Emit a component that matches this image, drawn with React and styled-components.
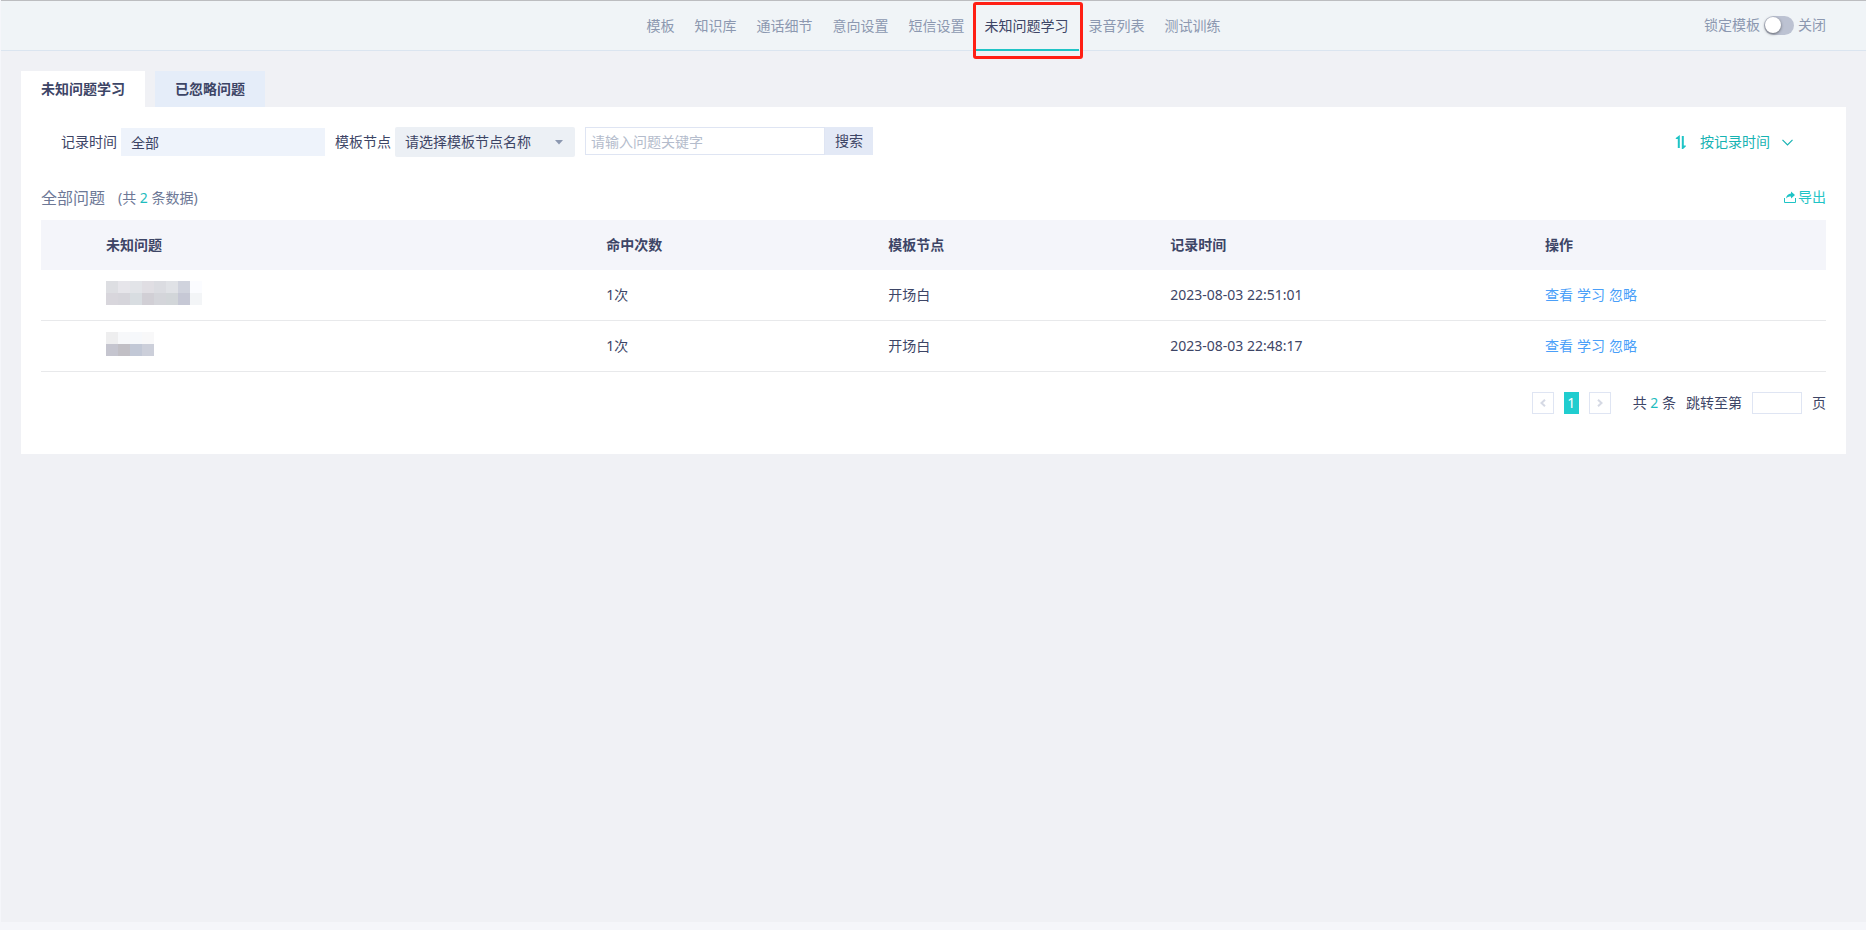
import React, { useState } from "react";
import styled, { createGlobalStyle } from "styled-components";

const GlobalStyle = createGlobalStyle`
  * {
    box-sizing: border-box;
  }
  body {
    margin: 0;
    background: #f5f6fa;
    color: #3d4566;
    font-family: "Noto Sans", "Noto Sans CJK SC", sans-serif;
    font-size: 14px;
    line-height: 20px;
  }
  button, input, select {
    margin: 0;
    padding: 0;
    border: 0;
    border-radius: 0;
    background: none;
    color: inherit;
    font: inherit;
    outline: none;
  }
  button {
    cursor: pointer;
  }
  a {
    text-decoration: none;
  }
`;
const Page = styled.div`
  min-height: calc(100vh - 8px);
  margin-left: 1px;
  background: #f0f1f5;
`;
const Header = styled.header`
  display: grid;
  grid-template-columns: 1fr auto 1fr;
  height: 51px;
  padding-right: 40px;
  padding-left: 40px;
  background: #f0f4f7;
  border-top: 1px solid #bcbdc0;
  border-bottom: 1px solid #dbe5f0;
`;
const Nav = styled.nav`
  display: flex;
  grid-column: 2;
`;
const NavLink = styled.a`
  position: relative;
  height: 50px;
  padding: 15px 10px 0;
  color: ${(props) => (props.$active ? "#3d4566" : "#8c98b0")};
  border-bottom: 2px solid ${(props) => (props.$active ? "#1fc4c6" : "transparent")};
`;
const Highlight = styled.span`
  position: absolute;
  top: 1px;
  right: -4px;
  bottom: -10px;
  left: -2px;
  border: 3px solid #ff1f14;
  border-radius: 3px;
  pointer-events: none;
`;
const Lock = styled.label`
  display: flex;
  align-items: center;
  justify-self: end;
  gap: 4px;
  height: 48px;
  color: #8c98b0;
`;
const Switch = styled.input`
  display: flex;
  align-items: center;
  appearance: none;
  width: 30px;
  height: 19px;
  padding: 0 1px;
  border-radius: 10px;
  background: ${(props) => (props.checked ? "#1fc4c6" : "#bcc2d2")};
  &::before {
    content: "";
    width: 16px;
    height: 16px;
    margin-left: ${(props) => (props.checked ? "12px" : "0")};
    border-radius: 50%;
    background: white;
    box-shadow: 0 1px 3px rgba(0, 0, 0, 0.5);
  }
`;
const Main = styled.main`
  padding: 20px;
`;
const Tabs = styled.div`
  display: flex;
  gap: 10px;
`;
const Tab = styled.button`
  height: 36px;
  padding: 0 20px;
  font-weight: bold;
  background: ${(props) => (props.$active ? "white" : "#e5edf9")};
`;
const Panel = styled.section`
  padding: 20px 20px 40px;
  background: white;
`;
const Filters = styled.form`
  display: flex;
  align-items: center;
  gap: 10px;
  height: 30px;
  padding: 0 20px;
`;
const Field = styled.label`
  display: flex;
  align-items: center;
  gap: 4px;
`;
const TimeInput = styled.input`
  width: 204px;
  height: 28px;
  padding: 0 10px;
  background: #eef3fb;
`;
const SelectBox = styled.span`
  position: relative;
  display: flex;
  svg {
    position: absolute;
    top: 13px;
    right: 12px;
    pointer-events: none;
  }
`;
const Select = styled.select`
  appearance: none;
  width: 180px;
  height: 30px;
  padding: 0 30px 0 10px;
  border-radius: 2px;
  background: #ecf0f5;
`;
const Search = styled.div`
  display: flex;
  align-self: flex-start;
`;
const SearchInput = styled.input`
  width: 240px;
  height: 28px;
  padding: 0 5px;
  border: 1px solid #dfe5f3;
  &::placeholder {
    color: #b4bccc;
  }
`;
const SearchButton = styled.button`
  height: 28px;
  padding: 0 10px;
  background: #e3e9f6;
`;
const Sort = styled.button`
  display: flex;
  align-items: center;
  gap: 12px;
  margin-left: auto;
  margin-right: 13px;
  color: #17b3b3;
`;
const Summary = styled.div`
  display: flex;
  align-items: center;
  height: 22px;
  margin-top: 30px;
  margin-bottom: 11px;
  color: #6d7896;
`;
const Title = styled.h2`
  margin: 0;
  font-size: 16px;
  font-weight: normal;
`;
const Count = styled.span`
  margin-left: 13px;
`;
const Num = styled.span`
  color: #1fbcbe;
`;
const Export = styled.button`
  display: flex;
  align-items: center;
  align-self: flex-start;
  gap: 2px;
  margin-left: auto;
  color: #1fc4c6;
`;
const Table = styled.table`
  width: 100%;
  table-layout: fixed;
  border-collapse: separate;
  border-spacing: 0;
  text-align: left;
`;
const Col = styled.col`
  width: ${(props) => props.$width};
`;
const Th = styled.th`
  height: 50px;
  padding: 0 10px;
  background: #f4f5fa;
`;
const Td = styled.td`
  height: 51px;
  padding: 0 10px;
  border-bottom: 1px solid #e8e9eb;
`;
const QuestionCell = styled(Td)`
  padding-top: 11px;
  vertical-align: top;
`;
const Mosaic = styled.div`
  display: grid;
  grid-template-columns: repeat(${(props) => props.$cols}, 12px);
  grid-auto-rows: 12px;
`;
const Block = styled.span`
  background: ${(props) => props.$color};
`;
const Actions = styled.div`
  display: flex;
  gap: 4px;
`;
const ActionLink = styled.a`
  color: #4a9ff9;
`;
const Pager = styled.div`
  display: flex;
  align-items: center;
  justify-content: flex-end;
  gap: 10px;
  margin-top: 20px;
`;
const PageArrow = styled.button`
  display: flex;
  align-items: center;
  justify-content: center;
  width: 22px;
  height: 22px;
  border: 1px solid #dfe5f3;
`;
const PageNumber = styled.button`
  width: 15px;
  height: 22px;
  color: white;
  background: #20cdcf;
`;
const Total = styled.span`
  margin-left: 12px;
`;
const Jump = styled.label`
  display: flex;
  align-items: center;
  gap: 10px;
`;
const PageInput = styled.input`
  width: 50px;
  height: 22px;
  padding: 0 5px;
  border: 1px solid #dfe5f3;
`;

const navItems = [
  "模板",
  "知识库",
  "通话细节",
  "意向设置",
  "短信设置",
  "未知问题学习",
  "录音列表",
  "测试训练",
];
const rows = [
  {
    cols: 8,
    blocks: [
      "#dddee2", "#e6e5ea", "#e2e4e8", "#e0dee3", "#dbdce1", "#e0e2e6", "#d0d3dd", "#fbfcff",
      "#d8d6dc", "#d6d5db", "#d8dde1", "#d1cfd5", "#d4d5da", "#d2d6d9", "#c6c8d5", "#f3f5f7",
    ],
    hits: "1次",
    node: "开场白",
    time: "2023-08-03 22:51:01",
  },
  {
    cols: 4,
    blocks: [
      "#eeeeef", "#f7f8fa", "#f6f8fb", "#f8f8f9",
      "#c5c5cf", "#c1bfc5", "#c2c8d6", "#cccfda",
    ],
    hits: "1次",
    node: "开场白",
    time: "2023-08-03 22:48:17",
  },
];

const SortIcon = () => (
  <svg width="13" height="14" viewBox="0 0 13 14" fill="#1fc4c6">
    <path d="M4.800 0v13H2.800V4H.8V3zM6.800 1h2v9.500h2V11.500L8 14H6.800z" />
  </svg>
);
const ChevronDown = () => (
  <svg width="11" height="7" viewBox="0 0 11 7" fill="none" stroke="currentColor" strokeWidth="1.200">
    <path d="M.5 .8l5 5 5-5" />
  </svg>
);
const ExportIcon = () => (
  <svg width="12" height="13" viewBox="0 0 12 13" fill="currentColor">
    <path d="M7 .5L11 4 7 7.500V5.500C5 5.400 3.500 6 2 7.500 2.400 4.600 4.200 2.700 7 2.500z" />
    <path d="M.5 7v4.500h11V7" fill="none" stroke="currentColor" />
  </svg>
);
const Caret = () => (
  <svg width="8" height="5" viewBox="0 0 8 5" fill="#8c98b0">
    <path d="M0 0h8L4 4.500z" />
  </svg>
);
const Arrow = ({ right }) => (
  <svg width="8" height="8" viewBox="0 0 8 8" fill="none" stroke="#d5d9e4" strokeWidth="2">
    <path d={right ? "M2 .8L5.500 4 2 7.200" : "M6 .8L2.500 4 6 7.200"} />
  </svg>
);

function TopBar() {
  const [locked, setLocked] = useState(false);
  return (
    <Header>
      <Nav>
        {navItems.map((item, i) => (
          <NavLink key={item} href="#" $active={i === 5}>
            {item}
            {i === 5 && <Highlight />}
          </NavLink>
        ))}
      </Nav>
      <Lock>
        锁定模板
        <Switch
          type="checkbox"
          checked={locked}
          onChange={(e) => setLocked(e.target.checked)}
        />
        {locked ? "开启" : "关闭"}
      </Lock>
    </Header>
  );
}

function FilterBar() {
  return (
    <Filters onSubmit={(e) => e.preventDefault()}>
      <Field>
        记录时间
        <TimeInput type="text" defaultValue="全部" />
      </Field>
      <Field>
        模板节点
        <SelectBox>
          <Select>
            <option>请选择模板节点名称</option>
            <option>开场白</option>
          </Select>
          <Caret />
        </SelectBox>
      </Field>
      <Search>
        <SearchInput
          type="text"
          placeholder="请输入问题关键字"
          aria-label="问题关键字"
        />
        <SearchButton type="submit">搜索</SearchButton>
      </Search>
      <Sort type="button">
        <SortIcon />
        按记录时间
        <ChevronDown />
      </Sort>
    </Filters>
  );
}

function QuestionTable() {
  return (
    <Table>
      <colgroup>
        <Col $width="55px" />
        <Col />
        <Col $width="15.800%" />
        <Col $width="15.800%" />
        <Col $width="21%" />
        <Col $width="16.300%" />
      </colgroup>
      <thead>
        <tr>
          <Th />
          <Th>未知问题</Th>
          <Th>命中次数</Th>
          <Th>模板节点</Th>
          <Th>记录时间</Th>
          <Th>操作</Th>
        </tr>
      </thead>
      <tbody>
        {rows.map((row) => (
          <tr key={row.time}>
            <Td />
            <QuestionCell>
              <Mosaic $cols={row.cols}>
                {row.blocks.map((color, i) => (
                  <Block key={i} $color={color} />
                ))}
              </Mosaic>
            </QuestionCell>
            <Td>{row.hits}</Td>
            <Td>{row.node}</Td>
            <Td>{row.time}</Td>
            <Td>
              <Actions>
                <ActionLink href="#">查看</ActionLink>
                <ActionLink href="#">学习</ActionLink>
                <ActionLink href="#">忽略</ActionLink>
              </Actions>
            </Td>
          </tr>
        ))}
      </tbody>
    </Table>
  );
}

function Pagination() {
  return (
    <Pager>
      <PageArrow aria-label="上一页">
        <Arrow />
      </PageArrow>
      <PageNumber>1</PageNumber>
      <PageArrow aria-label="下一页">
        <Arrow right />
      </PageArrow>
      <Total>
        共 <Num>2</Num> 条
      </Total>
      <Jump>
        跳转至第
        <PageInput type="text" />页
      </Jump>
    </Pager>
  );
}

function App() {
  return (
    <>
      <GlobalStyle />
      <Page>
        <TopBar />
        <Main>
          <Tabs>
            <Tab $active>未知问题学习</Tab>
            <Tab>已忽略问题</Tab>
          </Tabs>
          <Panel>
            <FilterBar />
            <Summary>
              <Title>全部问题</Title>
              <Count>
                (共 <Num>2</Num> 条数据)
              </Count>
              <Export>
                <ExportIcon />
                导出
              </Export>
            </Summary>
            <QuestionTable />
            <Pagination />
          </Panel>
        </Main>
      </Page>
    </>
  );
}

export default App;
